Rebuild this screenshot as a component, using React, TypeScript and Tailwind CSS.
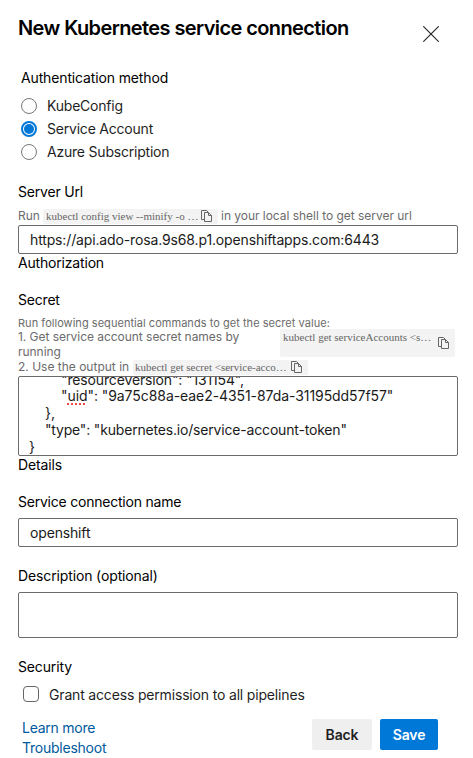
import type { ReactNode } from "react";

function CopyIcon({ className = "" }: { className?: string }) {
  return (
    <svg className={`h-[12px] w-[11px] shrink-0 ${className}`} viewBox="0 0 11 12" fill="none" stroke="#666666" strokeWidth="1">
      <path d="M3.5 9.5h-3v-9h5l1.5 1.5" />
      <path d="M3.5 2.5h4l3 3v6h-7z" />
      <path d="M7.5 2.5v3h3" />
    </svg>
  );
}

function Label({ children, className = "tracking-[-0.14px]" }: { children: ReactNode; className?: string }) {
  return <div className={`h-5 text-[14px] leading-5 whitespace-nowrap text-black ${className}`}>{children}</div>;
}

function Radio({ label, checked = false }: { label: string; checked?: boolean }) {
  return (
    <div className="flex h-[23px] items-center">
      <span
        className={
          checked
            ? "flex size-4 items-center justify-center rounded-full border-2 border-[#0078d7] bg-white"
            : "size-4 rounded-full border border-[#777777] bg-white"
        }
      >
        {checked && <span className="size-[10px] rounded-full bg-[#0078d7]" />}
      </span>
      <span className="ml-[10px] text-[14px] tracking-[-0.21px] text-[#1f1f1f]">{label}</span>
    </div>
  );
}

export default function App() {
  return (
    <div className="relative flex h-[758px] w-[473px] flex-col overflow-hidden bg-white pl-[18px] font-[Inter,sans-serif]">
      <header className="flex h-[68px] items-start justify-between pr-[34px]">
        <h1 className="mt-[14px] text-[20px] leading-7 font-semibold tracking-[-0.6px] whitespace-nowrap text-black">
          New Kubernetes service connection
        </h1>
        <svg className="mt-[26px] size-4" viewBox="0 0 16 16" stroke="#222222" strokeWidth="1.1">
          <path d="M.3.3l15.4 15.4M15.7.3L.3 15.7" />
        </svg>
      </header>

      <Label className="ml-[3px] tracking-[-0.14px]">Authentication method</Label>
      <div className="mt-[6px] ml-[3px]">
        <Radio label="KubeConfig" />
        <Radio label="Service Account" checked />
        <Radio label="Azure Subscription" />
      </div>

      <Label className="mt-[19px] tracking-[-0.2px]">Server Url</Label>
      <div className="mt-[6px] flex h-4 items-center text-[12px] leading-4 whitespace-nowrap text-[#6b6b6b]">
        <span className="w-[25px]">Run</span>
        <span className="flex h-[15px] w-[175px] items-center rounded-[2px] bg-[#f3f3f3] pl-[3px] text-[#666666]">
          <span className="w-[155px] font-['Liberation_Serif',serif] text-[11px]">kubectl config view --minify -o …</span>
          <CopyIcon />
        </span>
        <span className="ml-[3px] tracking-[-0.03px]">in your local shell to get server url</span>
      </div>
      <div className="mt-[1px] flex h-[29px] w-[440px] items-center rounded-[2px] border border-[#6b6b6b] pl-[11px] text-[14px] tracking-[-0.14px] text-[#1a1a1a]">
        <span>https://api.ado-rosa.9s68.p1.openshiftapps.com:6443</span>
      </div>
      <Label className="-mt-[1px] tracking-[-0.18px]">Authorization</Label>

      <Label className="mt-[17px] tracking-[-0.2px]">Secret</Label>
      <div className="mt-[6px] h-[15px] text-[11px] leading-[15px] tracking-[0.04px] whitespace-nowrap text-[#6b6b6b]">
        Run following sequential commands to get the secret value:
      </div>
      <div className="-mt-[2px] flex h-[30px] w-[437px] justify-between text-[12px] leading-[15px] text-[#6b6b6b]">
        <span className="tracking-[-0.04px] whitespace-nowrap">
          1. Get service account secret names by
          <br />
          running
        </span>
        <span className="flex h-7 w-[175px] rounded-[2px] bg-[#f3f3f3] pl-[3px] text-[#666666]">
          <span className="mt-[1px] w-[155px] font-['Liberation_Serif',serif] text-[11px] whitespace-nowrap">
            kubectl get serviceAccounts &lt;s…
          </span>
          <CopyIcon className="mt-2" />
        </span>
      </div>
      <div className="flex h-4 items-center text-[12px] leading-4 whitespace-nowrap text-[#6b6b6b]">
        <span className="w-[115px]">2. Use the output in</span>
        <span className="flex h-[15px] w-[175px] items-center rounded-[2px] bg-[#f3f3f3] pl-[2px] text-[#666666]">
          <span className="w-[156px] font-['Liberation_Serif',serif] text-[11px]">kubectl get secret &lt;service-acco…</span>
          <CopyIcon />
        </span>
      </div>
      <div className="mt-[1px] flex h-20 w-[440px] flex-col justify-end overflow-hidden rounded-[2px] border border-[#6b6b6b] pl-[11px] text-[14px] leading-[17px] whitespace-nowrap text-[#1a1a1a]">
        <div className="-mb-[1px] h-[17px] shrink-0 pl-[31px] tracking-[-0.14px]">"resourceversion": "131154",</div>
        <div className="h-[17px] shrink-0 pl-[31px] tracking-[-0.07px]">
          "<span className="underline decoration-[#f04848] decoration-dotted decoration-2 underline-offset-2">uid</span>": "9a75c88a-eae2-4351-87da-31195dd57f57"
        </div>
        <div className="h-[17px] shrink-0 pl-[15px]">{"},"}</div>
        <div className="h-[17px] shrink-0 pl-[15px] tracking-[-0.18px]">"type": "kubernetes.io/service-account-token"</div>
        <div className="-ml-px h-[17px] shrink-0">{"}"}</div>
      </div>
      <Label className="-mt-[1px] tracking-[-0.14px]">Details</Label>

      <Label className="mt-[17px] tracking-[-0.22px]">Service connection name</Label>
      <div className="mt-[6px] flex h-[29px] w-[440px] items-center rounded-[2px] border border-[#6b6b6b] pl-[11px] text-[14px] tracking-[-0.16px] text-[#1a1a1a]">
        openshift
      </div>

      <Label className="mt-[19px] tracking-[-0.13px]">Description (optional)</Label>
      <div className="mt-[6px] h-[46px] w-[440px] rounded-[2px] border border-[#6b6b6b]" />

      <Label className="mt-[19px] tracking-[-0.14px]">Security</Label>
      <div className="mt-[8px] ml-[5px] flex h-[18px] items-center">
        <span className="size-4 rounded-[4px] border border-[#666666] bg-white" />
        <span className="ml-[10px] text-[14px] tracking-[-0.17px] text-[#1f1f1f]">Grant access permission to all pipelines</span>
      </div>

      <footer className="mt-[15px] flex h-10 w-[420px] justify-between pl-1">
        <div className="text-[14px] leading-5 tracking-[-0.24px] text-[#005a9e]">
          <div>Learn more</div>
          <div>Troubleshoot</div>
        </div>
        <div className="mt-[1px] flex gap-2 text-[14px] font-semibold tracking-[-0.1px]">
          <button className="h-[31px] w-[60px] rounded-[2px] bg-[#efefef] text-[#1f1f1f]">Back</button>
          <button className="h-[31px] w-[58px] rounded-[2px] bg-[#0078d7] text-white">Save</button>
        </div>
      </footer>
    </div>
  );
}
